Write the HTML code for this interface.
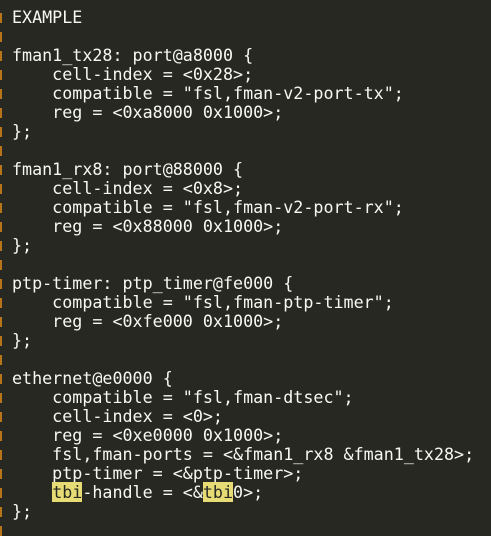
<!DOCTYPE html>
<html><head><style>
html,body{margin:0;padding:0;background:#272822;width:491px;height:535px;overflow:hidden}
pre{position:absolute;left:12px;top:8px;margin:0;font-family:"DejaVu Sans Mono","Liberation Mono",monospace;font-size:16.7px;line-height:19px;color:#f8f8f2}
.h{background:#e6db74;color:#272822}
.g{position:absolute;left:0;width:2px;height:10px;background:#b8741a}
</style></head><body>
<div id="gut"></div>
<pre>EXAMPLE

fman1_tx28: port@a8000 {
    cell-index = &lt;0x28&gt;;
    compatible = "fsl,fman-v2-port-tx";
    reg = &lt;0xa8000 0x1000&gt;;
};

fman1_rx8: port@88000 {
    cell-index = &lt;0x8&gt;;
    compatible = "fsl,fman-v2-port-rx";
    reg = &lt;0x88000 0x1000&gt;;
};

ptp-timer: ptp_timer@fe000 {
    compatible = "fsl,fman-ptp-timer";
    reg = &lt;0xfe000 0x1000&gt;;
};

ethernet@e0000 {
    compatible = "fsl,fman-dtsec";
    cell-index = &lt;0&gt;;
    reg = &lt;0xe0000 0x1000&gt;;
    fsl,fman-ports = &lt;&amp;fman1_rx8 &amp;fman1_tx28&gt;;
    ptp-timer = &lt;&amp;ptp-timer&gt;;
    <span class="h">tbi</span>-handle = &lt;&amp;<span class="h">tbi</span>0&gt;;
};</pre>
<script>
var g=document.getElementById('gut'),s='';
for(var i=0;i<28;i++){s+='<div class="g" style="top:'+(13+i*19)+'px"></div>';}
g.innerHTML=s;
</script>
</body></html>
